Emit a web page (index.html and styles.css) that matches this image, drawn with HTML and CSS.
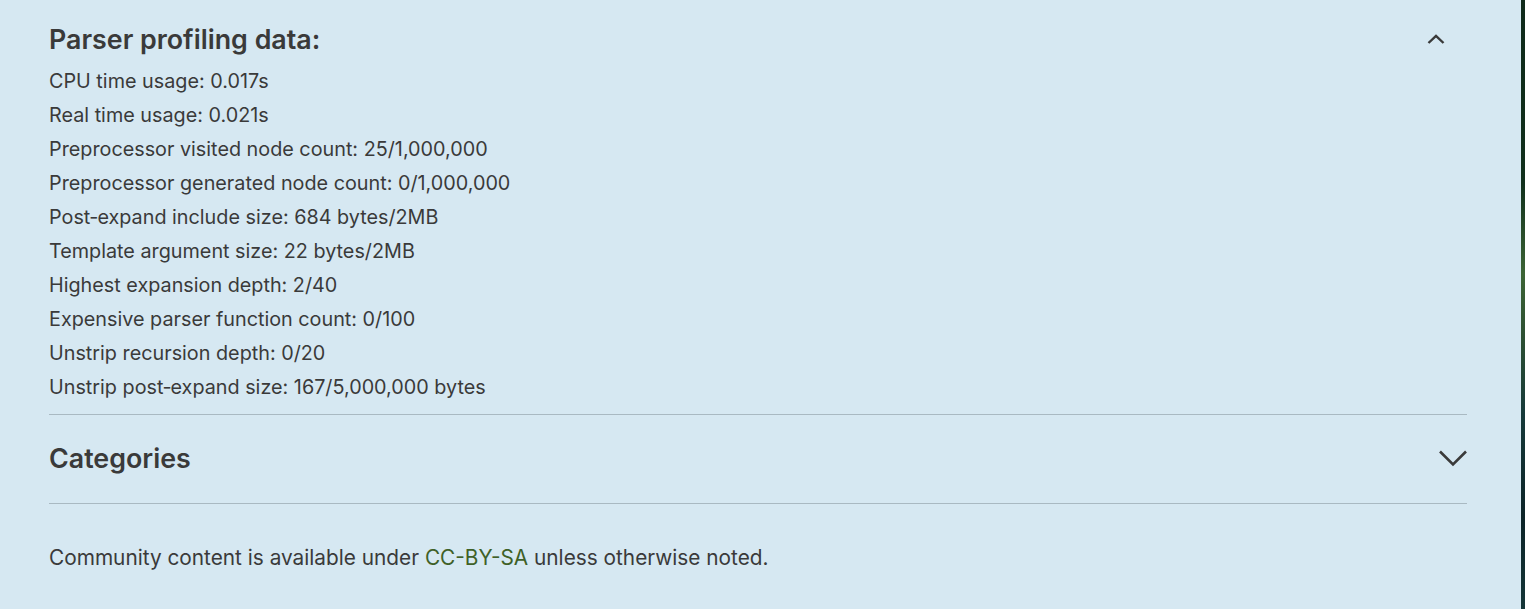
FILE: index.html
```html
<!DOCTYPE HTML>
<html>
<head>
	<meta http-equiv="Content-Type" content="text/html; charset=utf-8">
	<title>Parser profiling data</title>
	<link rel="stylesheet" href="styles.css">
</head>
<body>
	<div class="page">
		<section class="collapsible open">
			<div class="collapsible-head">
				<h2>Parser profiling data:</h2>
				<svg class="chevron up" width="18" height="10" viewBox="0 0 18 10">
					<path d="M1.5 9 L9 1.8 L16.5 9" fill="none" stroke="#3a3a3a" stroke-width="2.4"/>
				</svg>
			</div>
			<ul class="stats">
				<li>CPU time usage: 0.017s</li>
				<li>Real time usage: 0.021s</li>
				<li>Preprocessor visited node count: 25/1,000,000</li>
				<li>Preprocessor generated node count: 0/1,000,000</li>
				<li>Post‐expand include size: 684 bytes/2MB</li>
				<li>Template argument size: 22 bytes/2MB</li>
				<li>Highest expansion depth: 2/40</li>
				<li>Expensive parser function count: 0/100</li>
				<li>Unstrip recursion depth: 0/20</li>
				<li>Unstrip post‐expand size: 167/5,000,000 bytes</li>
			</ul>
		</section>

		<section class="collapsible closed">
			<div class="collapsible-head">
				<h2>Categories</h2>
				<svg class="chevron down" width="28" height="17" viewBox="0 0 28 17">
					<path d="M1 1.5 L14 14.5 L27 1.5" fill="none" stroke="#3a3a3a" stroke-width="2.6"/>
				</svg>
			</div>
		</section>

		<p class="license">Community content is available under <a href="#">CC-BY-SA</a> unless otherwise noted.</p>
	</div>
	<div class="backdrop"></div>
</body>
</html>
```

FILE: styles.css
```css
body{
	margin: 0;
	display: flex;
	height: 609px;
	overflow: hidden;
	font-family: Inter, "Noto Sans", sans-serif;
	color: #3a3a3a;
	background-color: #d6e8f2;
}
.page{
	width: 1521px;
	flex: none;
	background-color: #d6e8f2;
	padding: 0 54px 0 49px;
	box-sizing: border-box;
}
.backdrop{
	flex: 1;
	background: linear-gradient(180deg, #0f2a1a 0%, #10301c 30%, #3c6435 45%, #2d5032 55%, #163a3a 68%, #0c2428 85%, #143638 100%);
}

.collapsible{
	border-bottom: 1px solid #a9b9c2;
}
.collapsible-head{
	display: flex;
	align-items: center;
	justify-content: space-between;
}
.collapsible h2{
	margin: 0;
	font-size: 26.8px;
	font-weight: 600;
}

.open{
	padding: 19px 0 10px;
}
.open .collapsible-head{
	height: 40px;
}
.open .chevron{
	margin-right: 22px;
}

.stats{
	list-style: none;
	margin: 5px 0 0;
	padding: 0;
	font-size: 19.8px;
	line-height: 34px;
}

.closed{
	padding-bottom: 2px;
}
.closed .collapsible-head{
	height: 86px;
}

.license{
	margin: 37px 0 0;
	font-size: 20.8px;
	line-height: 34px;
}
.license a{
	color: #3f6127;
	text-decoration: none;
}
```
